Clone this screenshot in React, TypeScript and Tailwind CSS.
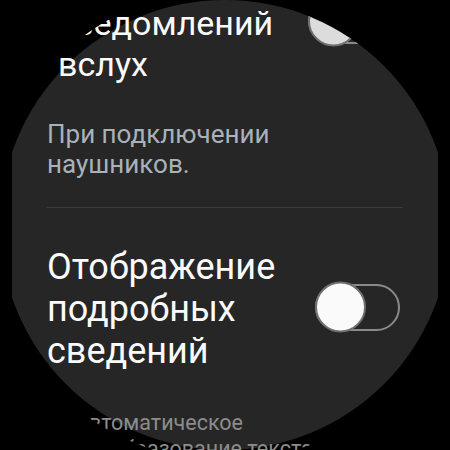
import React from "react";

function Toggle({ knob, className }: { knob: string; className?: string }) {
  return (
    <div className={`relative w-[85px] h-[47px] shrink-0 rounded-full border-2 border-[#8a8a8a] ${className ?? ""}`}>
      <div className={`absolute -left-[2px] top-1/2 -translate-y-1/2 w-[51px] h-[51px] rounded-full border-2 border-[#707070] ${knob}`} />
    </div>
  );
}

export default function App() {
  return (
    <div className="relative w-[450px] h-[450px] bg-black overflow-hidden font-['Roboto',sans-serif]">
      {/* round screen background */}
      <div className="absolute inset-0 rounded-full overflow-hidden flex justify-center">
        <div className="w-[426px] h-full bg-[#262626]" />
      </div>
      {/* scrolled list content */}
      <div className="absolute -left-[11px] -top-[11px] w-[472px] h-[472px] rounded-full overflow-hidden">
        <div className="w-[450px] ml-[11px] mt-[11px]">
          <div className="-mt-[38px] pl-[47px] pr-[47px] flex flex-col">
            <div className="flex items-center justify-between">
              <div className="ml-[11px] text-[34px] leading-[41px] text-[#fafafa] whitespace-nowrap">
                <div>Чтение</div>
                <div>уведомлений</div>
                <div>вслух</div>
              </div>
              <Toggle
                knob="bg-[#dcdcdc]"
                className="mr-[10px] -translate-y-[3px] [clip-path:circle(225px_at_-83px_228px)]"
              />
            </div>
            <div className="mt-[34px] text-[26px] leading-[30px] text-[#a9b2bb] whitespace-nowrap">
              <div>При подключении</div>
              <div>наушников.</div>
            </div>
            <div className="mt-[28px] h-px bg-[#3a3a3a]" />
            <div className="mt-[38px] flex items-center justify-between">
              <div className="text-[36px] leading-[42px] text-[#fafafa] whitespace-nowrap">
                <div>Отображение</div>
                <div>подробных</div>
                <div>сведений</div>
              </div>
              <Toggle knob="bg-[#fafafa]" className="mr-[3px] -translate-y-[2px]" />
            </div>
            <div className="mt-[38px] ml-[28px] text-[21.5px] leading-[26px] text-[#8c8c8c] whitespace-nowrap">
              <div>Автоматическое</div>
              <div>преобразование текста</div>
            </div>
          </div>
        </div>
      </div>
    </div>
  );
}
